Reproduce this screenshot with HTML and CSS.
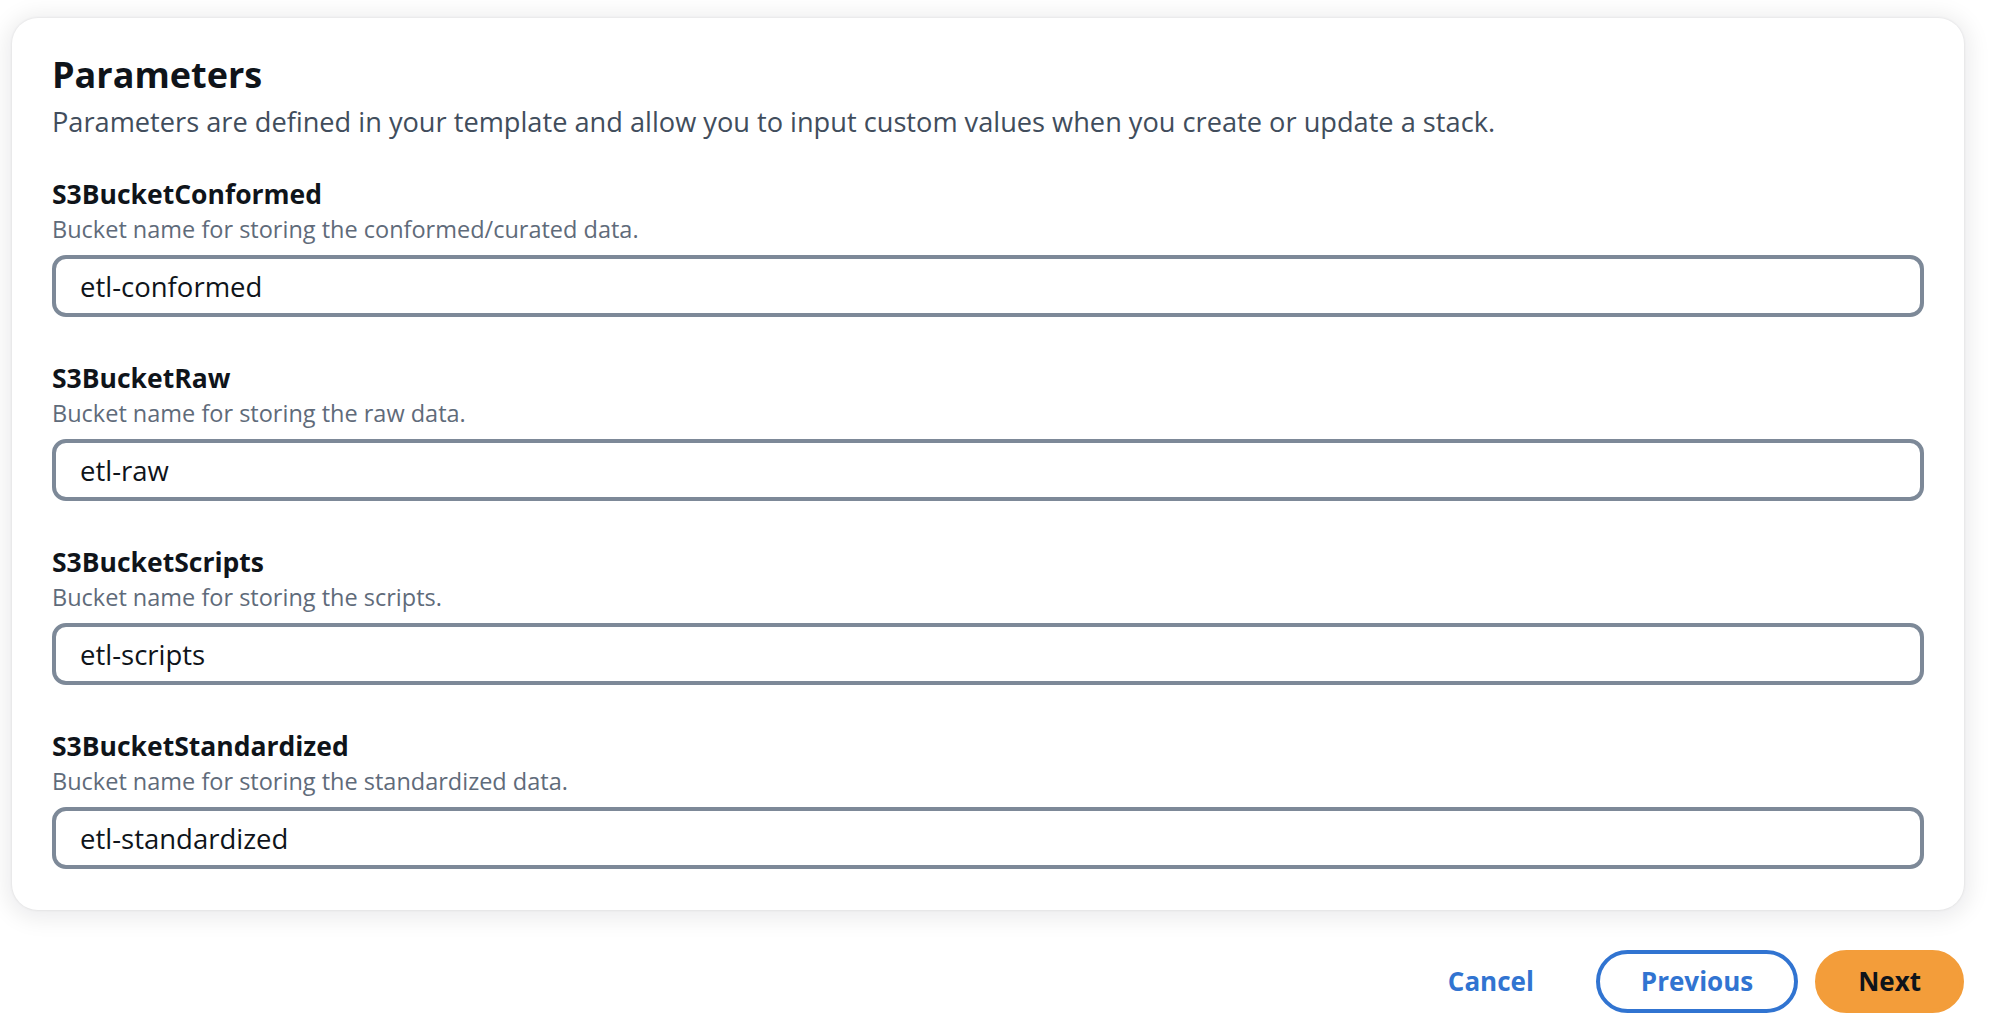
FILE: index.html
```html
<!DOCTYPE html>
<html lang="en">
<head>
<meta charset="utf-8">
<title>Parameters</title>
<link rel="stylesheet" href="styles.css">
</head>
<body>
<main class="page">
  <section class="card">
    <header class="card-header">
      <h2 class="card-title">Parameters</h2>
      <p class="card-desc">Parameters are defined in your template and allow you to input custom values when you create or update a stack.</p>
    </header>
    <div class="fields">
      <div class="field">
        <label class="field-label" for="p1">S3BucketConformed</label>
        <div class="field-desc">Bucket name for storing the conformed/curated data.</div>
        <input class="field-input" id="p1" type="text" value="etl-conformed">
      </div>
      <div class="field">
        <label class="field-label" for="p2">S3BucketRaw</label>
        <div class="field-desc">Bucket name for storing the raw data.</div>
        <input class="field-input" id="p2" type="text" value="etl-raw">
      </div>
      <div class="field">
        <label class="field-label" for="p3">S3BucketScripts</label>
        <div class="field-desc">Bucket name for storing the scripts.</div>
        <input class="field-input" id="p3" type="text" value="etl-scripts">
      </div>
      <div class="field">
        <label class="field-label" for="p4">S3BucketStandardized</label>
        <div class="field-desc">Bucket name for storing the standardized data.</div>
        <input class="field-input" id="p4" type="text" value="etl-standardized">
      </div>
    </div>
  </section>
  <div class="actions">
    <button class="btn btn-link" type="button">Cancel</button>
    <button class="btn btn-normal" type="button">Previous</button>
    <button class="btn btn-primary" type="button">Next</button>
  </div>
</main>
</body>
</html>
```

FILE: styles.css
```css
* {
  box-sizing: border-box;
}

html, body {
  margin: 0;
  padding: 0;
  background: #ffffff;
}

body {
  font-family: "Open Sans", "Noto Sans", sans-serif;
  color: #0f141a;
}

.page {
  padding: 18px 40px 0 12px;
}

.card {
  background: #ffffff;
  border-radius: 26px;
  box-shadow: 0 0 2px 1px rgba(0, 7, 22, 0.05), 0 3px 22px 6px rgba(0, 7, 22, 0.08);
  padding: 35px 40px 41px 40px;
}

.card-title {
  margin: 0;
  font-size: 36px;
  line-height: 44px;
  font-weight: 700;
  color: #0f141a;
}

.card-desc {
  margin: 9px 0 0 0;
  font-size: 27.2px;
  line-height: 32px;
  color: #414d5c;
}

.fields {
  display: flex;
  flex-direction: column;
  gap: 46px;
  margin-top: 41px;
}

.field {
  display: flex;
  flex-direction: column;
}

.field-label {
  font-size: 26.5px;
  line-height: 30px;
  font-weight: 700;
  color: #0f141a;
}

.field-desc {
  margin-top: 5px;
  font-size: 23.5px;
  line-height: 30px;
  color: #5f6b7a;
}

.field-input {
  margin-top: 11px;
  height: 62px;
  width: 100%;
  border: 4px solid #7d8998;
  border-radius: 14px;
  padding: 0 24px;
  font-family: inherit;
  font-size: 27.5px;
  color: #0f141a;
  background: #ffffff;
  outline: none;
}

.actions {
  display: flex;
  justify-content: flex-end;
  gap: 17px;
  margin-top: 40px;
}

.btn {
  font-family: inherit;
  font-size: 26px;
  font-weight: 700;
  line-height: 31px;
  padding: 12px 41px;
  border: 4px solid transparent;
  border-radius: 40px;
  background: transparent;
  cursor: pointer;
}

.btn-link {
  color: #3174d1;
}

.btn-normal {
  color: #3174d1;
  border-color: #3174d1;
  background: #ffffff;
}

.btn-primary {
  padding: 12px 39px;
  color: #0f141a;
  background: #f39d3a;
  border-color: #f39d3a;
}
```
